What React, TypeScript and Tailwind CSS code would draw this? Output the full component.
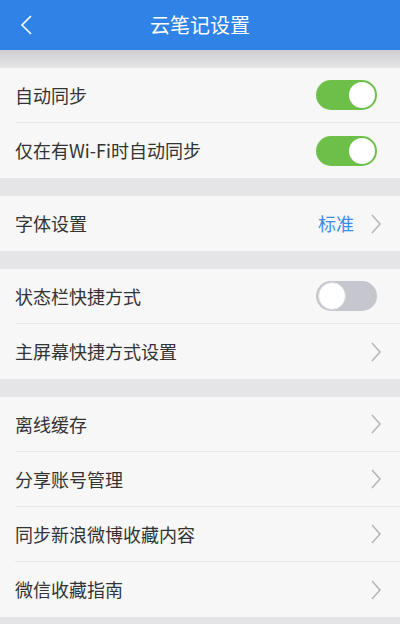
import React from 'react';

const font = { fontFamily: '"Noto Sans CJK SC", "Noto Sans", sans-serif' };

const Chevron = () => (
  <svg width="12" height="22" viewBox="0 0 12 22" fill="none" stroke="#b4b4b8" strokeWidth={1.5}>
    <path d="M2 2l8 9-8 9" />
  </svg>
);

const Toggle = ({ on }: { on: boolean }) =>
  on ? (
    <div className="mr-[5px] w-[61px] h-[30px] rounded-full bg-[#6cc04a] flex items-center justify-end p-[2px]">
      <div className="w-[26px] h-[26px] rounded-full bg-white" />
    </div>
  ) : (
    <div className="mr-[5px] w-[61px] h-[30px] rounded-full bg-[#c5c6ce] flex items-center justify-start p-[2px]">
      <div className="w-[28px] h-[28px] rounded-full bg-white border border-[#d9d9de]" />
    </div>
  );

const Row = ({ label, last, children }: { label: string; last?: boolean; children?: React.ReactNode }) => (
  <div className="bg-[#f7f7f7] pl-[15px]">
    <div className={`h-[55px] flex items-center justify-between pr-[18px] ${last ? '' : 'border-b border-[#e8e8ea]'}`}>
      <span className="text-[18px] text-[#333333]">{label}</span>
      {children ?? <Chevron />}
    </div>
  </div>
);

const Gap = () => <div className="h-[18px] bg-[#e5e5e7]" />;

export default function App() {
  return (
    <div className="w-[400px] h-[624px] bg-[#e5e5e7] overflow-hidden" style={font}>
      <div className="h-[50px] bg-[#2f82e6] flex items-center relative">
        <svg className="absolute left-[20px] top-[14px]" width="13" height="22" viewBox="0 0 13 22" fill="none" stroke="#ffffff" strokeWidth={1.6}>
          <path d="M11 2L2 11l9 9" />
        </svg>
        <div className="flex-1 text-center text-white text-[20px]">云笔记设置</div>
      </div>
      <div className="h-[18px] bg-gradient-to-b from-[#cfcfd2] to-[#e5e5e7]" />
      <Row label="自动同步">
        <Toggle on />
      </Row>
      <Row label="仅在有Wi-Fi时自动同步" last>
        <Toggle on />
      </Row>
      <Gap />
      <Row label="字体设置" last>
        <div className="flex items-center gap-[16px]">
          <span className="text-[18px] text-[#3a8ee6]">标准</span>
          <Chevron />
        </div>
      </Row>
      <Gap />
      <Row label="状态栏快捷方式">
        <Toggle on={false} />
      </Row>
      <Row label="主屏幕快捷方式设置" last />
      <Gap />
      <Row label="离线缓存" />
      <Row label="分享账号管理" />
      <Row label="同步新浪微博收藏内容" />
      <Row label="微信收藏指南" last />
    </div>
  );
}
